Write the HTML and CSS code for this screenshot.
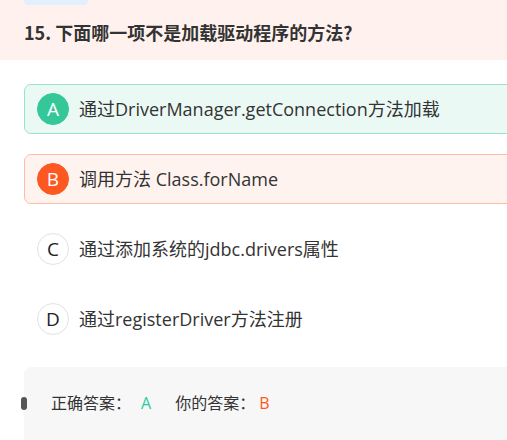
FILE: index.html
```html
<!DOCTYPE html>
<html lang="zh">
<head>
<meta charset="utf-8">
<link rel="stylesheet" href="styles.css">
</head>
<body>
<div class="page">
  <div class="header">
    <span class="tag">单选题</span>
    <h2 class="title">15. 下面哪一项不是加载驱动程序的方法?</h2>
  </div>
  <div class="options">
    <div class="option correct"><span class="letter">A</span><span class="text">通过DriverManager.getConnection方法加载</span></div>
    <div class="option wrong"><span class="letter">B</span><span class="text">调用方法 Class.forName</span></div>
    <div class="option"><span class="letter">C</span><span class="text">通过添加系统的jdbc.drivers属性</span></div>
    <div class="option"><span class="letter">D</span><span class="text">通过registerDriver方法注册</span></div>
  </div>
  <div class="answer">
    <span class="marker"></span>
    <span class="label">正确答案：</span><span class="ok">A</span>
    <span class="label mine">你的答案：</span><span class="bad">B</span>
  </div>
</div>
</body>
</html>
```

FILE: styles.css
```css
html, body {
  margin: 0;
  padding: 0;
  overflow: hidden;
  background: #fff;
}
.page {
  width: 560px;
  font-family: "Open Sans", "Noto Sans CJK SC", sans-serif;
  color: #333;
}
.header {
  background: #fff2ee;
  height: 60px;
  padding-left: 24px;
  box-sizing: border-box;
  overflow: hidden;
}
.tag {
  display: inline-block;
  margin-top: -15px;
  height: 20px;
  width: 64px;
  box-sizing: border-box;
  background: #e1efff;
  border-radius: 4px;
  color: #2a7cf6;
  font-size: 12px;
  line-height: 20px;
  text-align: center;
  vertical-align: top;
}
.title {
  margin: 0;
  margin-top: -3px;
  font-family: "Noto Sans CJK SC", sans-serif;
  font-size: 18px;
  line-height: 26px;
  font-weight: 700;
  color: #333;
}
.options {
  padding: 24px 0 0 24px;
  display: flex;
  flex-direction: column;
  gap: 20px;
}
.option {
  height: 50px;
  box-sizing: border-box;
  display: flex;
  align-items: center;
  padding-left: 12px;
  border: 1px solid transparent;
  border-radius: 7px 0 0 7px;
  gap: 10px;
}
.option.correct {
  background: #ebf9f5;
  border-color: #96e3c8;
}
.option.wrong {
  background: #fff3f0;
  border-color: #ffbcab;
}
.letter {
  width: 32px;
  height: 32px;
  box-sizing: border-box;
  border-radius: 50%;
  border: 1px solid #e2e2e2;
  background: #fff;
  display: flex;
  align-items: center;
  justify-content: center;
  font-size: 19px;
  color: #222;
  flex-shrink: 0;
}
.correct .letter {
  background: #34c899;
  border-color: #34c899;
  color: #fff;
}
.wrong .letter {
  background: #fd5722;
  border-color: #fd5722;
  color: #fff;
}
.text {
  font-size: 18px;
  line-height: 24px;
  color: #333;
  white-space: nowrap;
}
.answer {
  position: relative;
  margin: 23px 0 0 24px;
  height: 120px;
  background: #f7f7f7;
  border-radius: 8px 0 0 0;
  padding: 24px 0 0 27px;
  box-sizing: border-box;
  font-size: 16px;
  line-height: 24px;
}
.marker {
  position: absolute;
  left: -3px;
  top: 30px;
  width: 6px;
  height: 13px;
  border-radius: 3px;
  background: #555;
}
.ok {
  color: #2ec99a;
  margin-left: 10px;
}
.bad {
  color: #ff5722;
  margin-left: 4px;
}
.mine {
  margin-left: 20px;
}
```
